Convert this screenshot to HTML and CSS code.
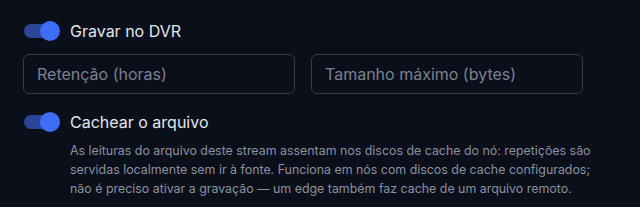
FILE: index.html
```html
<!DOCTYPE html>
<html lang="pt">
<head>
<meta charset="utf-8">
<link rel="stylesheet" href="styles.css">
</head>
<body>
<div class="panel">
  <label class="row">
    <span class="toggle"><span class="track"></span><span class="knob"></span></span>
    <span class="label">Gravar no DVR</span>
  </label>
  <div class="inputs">
    <input class="field" type="text" placeholder="Retenção (horas)">
    <input class="field" type="text" placeholder="Tamanho máximo (bytes)">
  </div>
  <label class="row">
    <span class="toggle"><span class="track"></span><span class="knob"></span></span>
    <span class="label">Cachear o arquivo</span>
  </label>
  <p class="desc">As leituras do arquivo deste stream assentam nos discos de cache do nó: repetições são servidas localmente sem ir à fonte. Funciona em nós com discos de cache configurados; não é preciso ativar a gravação — um edge também faz cache de um arquivo remoto.</p>
</div>
</body>
</html>
```
FILE: styles.css
```css
html, body {
  margin: 0;
  padding: 0;
  background: #0b0f19;
}
body {
  font-family: Inter, "Noto Sans", sans-serif;
  color: #e5e7eb;
}
.panel {
  width: 560px;
  padding: 21px 0 0 23px;
  display: flex;
  flex-direction: column;
}
.row {
  display: flex;
  align-items: center;
  gap: 10px;
  height: 20px;
}
.toggle {
  position: relative;
  width: 37px;
  height: 20px;
  flex: none;
}
.track {
  position: absolute;
  left: 1px;
  top: 3px;
  width: 34px;
  height: 14px;
  border-radius: 7px;
  background: #2d4599;
}
.knob {
  position: absolute;
  left: 17px;
  top: 0;
  width: 20px;
  height: 20px;
  border-radius: 50%;
  background: #3e6ef8;
}
.label {
  font-size: 16px;
  color: #e3e6ec;
  line-height: 20px;
}
.inputs {
  display: grid;
  grid-template-columns: 1fr 1fr;
  gap: 16px;
  margin: 13px 0 18px;
}
.field {
  box-sizing: border-box;
  height: 40px;
  width: 100%;
  margin: 0;
  padding: 0 13px;
  background: transparent;
  border: 1px solid #363c4a;
  border-radius: 6px;
  font-family: inherit;
  font-size: 16px;
  color: #e5e7eb;
  outline: none;
}
.field::placeholder {
  color: #7a8191;
}
.desc {
  width: 530px;
  margin: 9px 0 0 47px;
  font-size: 12.4px;
  line-height: 19px;
  color: #8a91a0;
}
```
